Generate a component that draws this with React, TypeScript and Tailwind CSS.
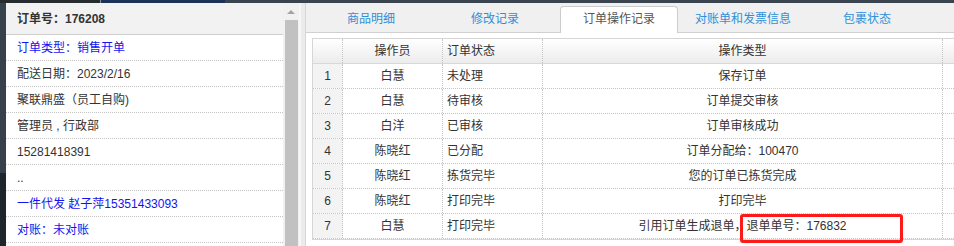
import React from "react";

const font = { fontFamily: '"Liberation Sans", "Noto Sans CJK SC", sans-serif' };

const leftRows: { text: string; blue?: boolean }[] = [
  { text: "订单类型：销售开单", blue: true },
  { text: "配送日期：2023/2/16" },
  { text: "聚联鼎盛（员工自购)" },
  { text: "管理员 , 行政部" },
  { text: "15281418391" },
  { text: ".." },
  { text: "一件代发 赵子萍15351433093", blue: true },
  { text: "对账：未对账", blue: true },
];

const tabs = ["商品明细", "修改记录", "订单操作记录", "对账单和发票信息", "包裹状态"];

const tableRows = [
  ["1", "白慧", "未处理", "保存订单"],
  ["2", "白慧", "待审核", "订单提交审核"],
  ["3", "白洋", "已审核", "订单审核成功"],
  ["4", "陈晓红", "已分配", "订单分配给：100470"],
  ["5", "陈晓红", "拣货完毕", "您的订单已拣货完成"],
  ["6", "陈晓红", "打印完毕", "打印完毕"],
  ["7", "白慧", "打印完毕", "引用订单生成退单，退单单号：176832"],
];

export default function App() {
  return (
    <div
      className="relative w-[954px] h-[246px] overflow-hidden bg-white flex flex-col text-[12px] text-[#333]"
      style={font}
    >
      {/* top strip */}
      <div className="h-[3px] flex shrink-0">
        <div className="w-[100px] bg-[#262b30]" />
        <div className="w-[1px] bg-[#8a9099]" />
        <div className="w-[124px] bg-[#1c3157]" />
        <div className="flex-1 bg-[#3a444e]" />
      </div>

      <div className="flex flex-1 min-h-0">
        {/* left dark strip */}
        <div className="w-[6px] flex flex-col shrink-0">
          <div className="h-[170px] bg-[#37414b]" />
          <div className="flex-1 bg-[#1f252b]" />
        </div>

        {/* left panel */}
        <div className="w-[277px] flex flex-col shrink-0 bg-white">
          <div className="h-[32px] bg-[#f2f2f2] border-b border-[#cfcfcf] flex items-center pl-[11px] font-bold text-[#333]">
            订单号：176208
          </div>
          {leftRows.map((r, i) => (
            <div
              key={i}
              className={`h-[26px] shrink-0 border-b border-dotted border-[#c4c4c4] flex items-center pl-[11px] ${
                r.blue ? "text-[#1414f0]" : "text-[#333]"
              }`}
            >
              {r.text}
            </div>
          ))}
        </div>

        {/* scrollbar */}
        <div className="w-[16px] shrink-0 bg-[#f1f1f1] flex flex-col items-center">
          <div className="h-[17px] flex items-center justify-center">
            <div className="w-0 h-0 border-l-[4px] border-r-[4px] border-b-[4px] border-l-transparent border-r-transparent border-b-[#a3a3a3]" />
          </div>
          <div className="w-[13px] flex-1 bg-[#c1c1c1]" />
        </div>

        {/* separator */}
        <div className="w-[6px] shrink-0 flex">
          <div className="w-[2px] bg-[#f6f6f6]" />
          <div className="flex-1 bg-[#ebebeb]" />
        </div>

        {/* right panel */}
        <div className="flex-1 min-w-0 flex flex-col border-l border-[#d6d6d6] bg-white">
          <div className="h-[30px] shrink-0 bg-[#f0f0f0] border-b border-[#d0d0d0] flex pl-[3px]">
            {tabs.map((t, i) => {
              const active = i === 2;
              return (
                <div key={t} className="w-[124px] shrink-0 px-[3px] pt-[3px]">
                  <div
                    className={`relative z-10 h-[27px] flex items-center justify-center pb-[2px] rounded-t-[4px] ${
                      active
                        ? "bg-white border border-b-0 border-[#cccccc] text-[#555]"
                        : "text-[#2f8fd8]"
                    }`}
                  >
                    {t}
                  </div>
                </div>
              );
            })}
          </div>

          <div className="pl-[6px] pt-[5px]">
            <div className="border-l border-t border-b border-[#d6d6d6]">
              {/* header */}
              <div className="grid grid-cols-[30px_100px_100px_400px_1fr] h-[25px] border-b border-[#d8d8d8] bg-gradient-to-b from-white to-[#ececec]">
                <div className="border-r border-dotted border-[#c4c4c4]" />
                <div className="border-r border-dotted border-[#c4c4c4] flex items-center justify-center">操作员</div>
                <div className="border-r border-dotted border-[#c4c4c4] flex items-center pl-[4px]">订单状态</div>
                <div className="border-r border-dotted border-[#c4c4c4] flex items-center justify-center">操作类型</div>
                <div />
              </div>
              {tableRows.map((r) => (
                <div
                  key={r[0]}
                  className="grid grid-cols-[30px_100px_100px_400px_1fr] h-[25px] border-b border-dotted border-[#c4c4c4]"
                >
                  <div className="border-r border-dotted border-[#c4c4c4] bg-[#f3f3f3] flex items-center justify-center">
                    {r[0]}
                  </div>
                  <div className="border-r border-dotted border-[#c4c4c4] flex items-center justify-center">{r[1]}</div>
                  <div className="border-r border-dotted border-[#c4c4c4] flex items-center pl-[4px]">{r[2]}</div>
                  <div className="border-r border-dotted border-[#c4c4c4] flex items-center justify-center">{r[3]}</div>
                  <div />
                </div>
              ))}
            </div>
          </div>
        </div>
      </div>

      {/* red highlight box */}
      <div className="absolute left-[740px] top-[214px] w-[163px] h-[29px] border-[3px] border-[#ff1a1a] rounded-[3px]" />
    </div>
  );
}
